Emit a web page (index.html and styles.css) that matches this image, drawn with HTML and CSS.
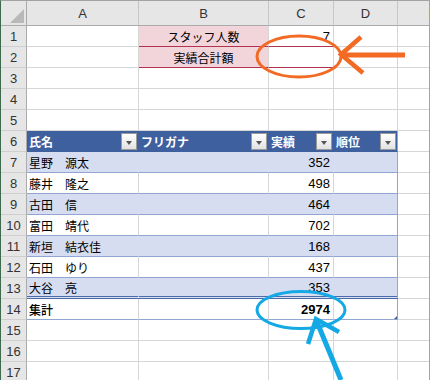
FILE: index.html
```html
<!DOCTYPE html>
<html lang="ja">
<head>
    <meta charset="UTF-8">
    <meta name="viewport" content="width=device-width, initial-scale=1.0">
    <title>実績集計</title>
    <link rel="stylesheet" href="styles.css">
</head>
<body>
    <div class="sheet">
        <div class="grid">
            <!-- column letters -->
            <div class="corner"><span class="corner-mark"></span></div>
            <div class="col-head">A</div>
            <div class="col-head">B</div>
            <div class="col-head">C</div>
            <div class="col-head">D</div>
            <div class="col-head">E</div>

            <!-- summary block -->
            <div class="row-head">1</div>
            <div class="cell"></div>
            <div class="cell label">スタッフ人数</div>
            <div class="cell num label-row">7</div>
            <div class="cell"></div>
            <div class="cell"></div>

            <div class="row-head">2</div>
            <div class="cell"></div>
            <div class="cell label">実績合計額</div>
            <div class="cell label-row"></div>
            <div class="cell"></div>
            <div class="cell"></div>

            <div class="row-head">3</div>
            <div class="cell"></div><div class="cell"></div><div class="cell"></div><div class="cell"></div><div class="cell"></div>
            <div class="row-head">4</div>
            <div class="cell"></div><div class="cell"></div><div class="cell"></div><div class="cell"></div><div class="cell"></div>
            <div class="row-head">5</div>
            <div class="cell"></div><div class="cell"></div><div class="cell"></div><div class="cell"></div><div class="cell"></div>

            <!-- staff table -->
            <div class="row-head">6</div>
            <div class="cell th">氏名<span class="filter"></span></div>
            <div class="cell th">フリガナ<span class="filter"></span></div>
            <div class="cell th">実績<span class="filter"></span></div>
            <div class="cell th last">順位<span class="filter"></span></div>
            <div class="cell"></div>

            <div class="row-head">7</div>
            <div class="cell tr band">星野　源太</div>
            <div class="cell tr band"></div>
            <div class="cell tr band num">352</div>
            <div class="cell tr band last"></div>
            <div class="cell"></div>

            <div class="row-head">8</div>
            <div class="cell tr">藤井　隆之</div>
            <div class="cell tr"></div>
            <div class="cell tr num">498</div>
            <div class="cell tr last"></div>
            <div class="cell"></div>

            <div class="row-head">9</div>
            <div class="cell tr band">古田　信</div>
            <div class="cell tr band"></div>
            <div class="cell tr band num">464</div>
            <div class="cell tr band last"></div>
            <div class="cell"></div>

            <div class="row-head">10</div>
            <div class="cell tr">富田　靖代</div>
            <div class="cell tr"></div>
            <div class="cell tr num">702</div>
            <div class="cell tr last"></div>
            <div class="cell"></div>

            <div class="row-head">11</div>
            <div class="cell tr band">新垣　結衣佳</div>
            <div class="cell tr band"></div>
            <div class="cell tr band num">168</div>
            <div class="cell tr band last"></div>
            <div class="cell"></div>

            <div class="row-head">12</div>
            <div class="cell tr">石田　ゆり</div>
            <div class="cell tr"></div>
            <div class="cell tr num">437</div>
            <div class="cell tr last"></div>
            <div class="cell"></div>

            <div class="row-head">13</div>
            <div class="cell tr band pre-total">大谷　亮</div>
            <div class="cell tr band pre-total"></div>
            <div class="cell tr band num pre-total">353</div>
            <div class="cell tr band last pre-total"></div>
            <div class="cell"></div>

            <div class="row-head">14</div>
            <div class="cell total">集計</div>
            <div class="cell total"></div>
            <div class="cell total num sum">2974</div>
            <div class="cell total last"><span class="resize"></span></div>
            <div class="cell"></div>

            <div class="row-head">15</div>
            <div class="cell"></div><div class="cell"></div><div class="cell"></div><div class="cell"></div><div class="cell"></div>
            <div class="row-head">16</div>
            <div class="cell"></div><div class="cell"></div><div class="cell"></div><div class="cell"></div><div class="cell"></div>
            <div class="row-head">17</div>
            <div class="cell"></div><div class="cell"></div><div class="cell"></div><div class="cell"></div><div class="cell"></div>
        </div>

        <!-- hand-drawn callouts on top of the grid -->
        <svg class="marks" width="430" height="380" viewBox="0 0 430 380">
            <g fill="none" stroke="#f26a24" stroke-linecap="butt">
                <ellipse cx="299" cy="56.5" rx="42" ry="20.5" stroke-width="3"/>
                <line x1="343" y1="55" x2="405" y2="55" stroke-width="5"/>
                <polyline points="361,37 341,54.5 363,73" stroke-width="4.5"/>
            </g>
            <g fill="none" stroke="#14a9e4">
                <ellipse cx="301" cy="310" rx="44" ry="18.5" stroke-width="3"/>
                <line x1="317" y1="322" x2="341" y2="380" stroke-width="5"/>
                <polyline points="308,344 316,319 339,332" stroke-width="4.5"/>
            </g>
        </svg>
    </div>
</body>
</html>
```

FILE: styles.css
```css
body {
    margin: 0;
    background: #fff;
    font-family: "Noto Sans CJK JP", "Liberation Sans", sans-serif;
    font-size: 12px;
    color: #000;
}

/* Window around the grid */
.sheet {
    position: relative;
    width: 430px;
    height: 380px;
    overflow: hidden;
    box-sizing: border-box;
    border-top: 1px solid #a3a3a3;
    border-left: 1px solid #3e6b4d;
    border-right: 1px solid #a3a3a3;
}

.grid {
    display: grid;
    grid-template-columns: 26px 112px 130px 65px 64px 70px;
    grid-template-rows: 25px;
    grid-auto-rows: 21px;
}

/* Headers */
.corner,
.col-head,
.row-head {
    box-sizing: border-box;
    background: #e6e6e6;
    color: #333;
    font-family: "Liberation Sans", sans-serif;
    font-size: 13px;
    display: flex;
    align-items: center;
    justify-content: center;
}

.corner {
    position: relative;
    border-right: 1px solid #ababab;
    border-bottom: 1px solid #ababab;
}

.corner-mark {
    position: absolute;
    right: 2px;
    bottom: 2px;
    width: 0;
    height: 0;
    border-left: 14px solid transparent;
    border-bottom: 14px solid #b9b9b9;
}

.col-head {
    border-right: 1px solid #c6c6c6;
    border-bottom: 1px solid #ababab;
    padding-top: 1px;
}

.row-head {
    border-right: 1px solid #ababab;
    border-bottom: 1px solid #cfcfcf;
    padding-top: 1px;
}

/* Cells */
.cell {
    box-sizing: border-box;
    border-right: 1px solid #d6d6d6;
    border-bottom: 1px solid #d6d6d6;
    display: flex;
    align-items: center;
    padding: 0 2px;
    white-space: nowrap;
    position: relative;
}

.num {
    justify-content: flex-end;
    padding-right: 3px;
    font-family: "Liberation Sans", sans-serif;
    font-size: 13px;
}

/* Pink labels of the summary block */
.label {
    justify-content: center;
    background: #f2d5db;
    border-right-color: #d6d6d6;
    border-bottom-color: #b2334f;
}

.label-row {
    border-bottom-color: #b2334f;
}

/* Table */
.th {
    background: #3f609f;
    border-right-color: #3f609f;
    border-bottom-color: #3f609f;
    color: #fff;
    font-weight: bold;
    justify-content: space-between;
    padding-right: 1px;
}

.filter {
    position: relative;
    width: 16px;
    height: 17px;
    box-sizing: border-box;
    border: 1px solid #9a9a9a;
    background: linear-gradient(#ffffff, #e2e2e2);
}

.filter::after {
    content: "";
    position: absolute;
    left: 4px;
    top: 7px;
    border-left: 3.5px solid transparent;
    border-right: 3.5px solid transparent;
    border-top: 4px solid #555;
}

.tr {
    border-bottom-color: #91a6d3;
}

.band {
    background: #d6ddf0;
    border-right-color: #d6ddf0;
}

.last {
    border-right-color: #91a6d3;
}

.pre-total {
    border-bottom: 3px double #4d6cab;
}

.total {
    font-weight: 500;
    border-bottom-color: #91a6d3;
}

.sum {
    font-weight: bold;
}

.resize {
    position: absolute;
    right: 0;
    bottom: 0;
    width: 0;
    height: 0;
    border-left: 3px solid transparent;
    border-bottom: 3px solid #3f5f9f;
}

/* Callout layer */
.marks {
    position: absolute;
    top: -1px;
    left: -1px;
    pointer-events: none;
}
```
